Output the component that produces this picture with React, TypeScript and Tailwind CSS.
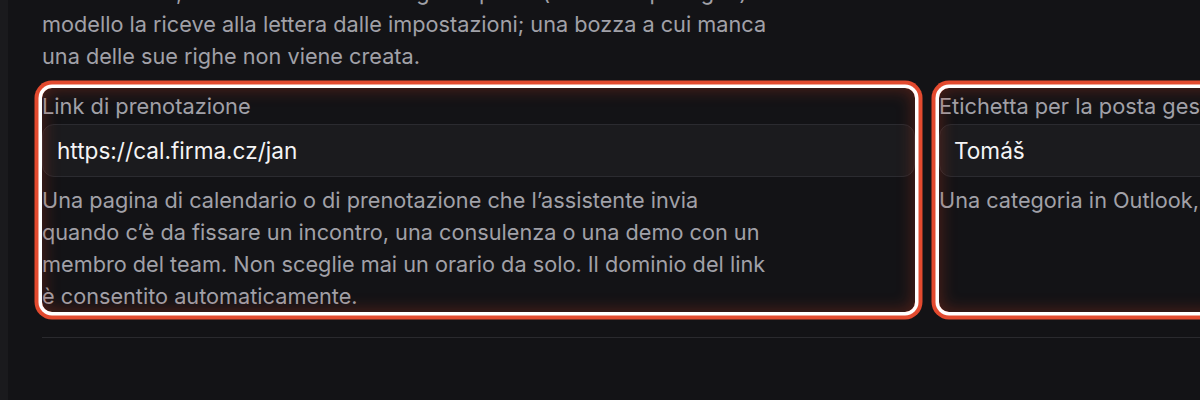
import React from "react";

function Highlight() {
  return (
    <div className="pointer-events-none absolute inset-0 rounded-[10px] shadow-[0_0_0_3.5px_#ffffff,0_0_0_7.5px_#e24a2f,inset_0_0_16px_2px_rgba(200,60,30,0.32)]" />
  );
}

function Field({
  label,
  value,
  children,
}: {
  label: string;
  value: string;
  children: React.ReactNode;
}) {
  return (
    <div className="relative flex flex-col pt-[3px]">
      <Highlight />
      <label className="whitespace-nowrap text-[21.8px] leading-[30px] text-[#a1a1a8]">
        {label}
      </label>
      <div className="mt-[3px] flex h-[53px] items-center rounded-[12px] border border-[#2b2b30] bg-[#1b1b1e] px-[14px] text-[22.6px] text-[#f4f4f5]">
        {value}
      </div>
      <div className="mt-[7px] max-w-[730px] text-[21.7px] leading-[32px] text-[#a1a1a8]">
        {children}
      </div>
    </div>
  );
}

export default function App() {
  return (
    <div
      className="flex h-[400px] w-[1200px] overflow-hidden bg-[#131316]"
      style={{ fontFamily: "Inter, 'Noto Sans', sans-serif" }}
    >
      <div className="w-[8px] shrink-0 bg-[#1a1a1d]" />
      <div className="flex min-w-0 flex-1 flex-col pl-[34px]">
        <p className="mt-[-24px] max-w-[730px] text-[21.7px] leading-[32px] text-[#a1a1a8]">
          L’intera firma, come deve chiudere ogni risposta (anche su più righe). Il
          modello la riceve alla lettera dalle impostazioni; una bozza a cui manca
          una delle sue righe non viene creata.
        </p>
        <div className="mt-[16px] grid w-[1770px] shrink-0 grid-cols-[873px_873px] gap-x-[24px]">
          <Field label="Link di prenotazione" value="https://cal.firma.cz/jan">
            Una pagina di calendario o di prenotazione che l’assistente invia
            quando c’è da fissare un incontro, una consulenza o una demo con un
            membro del team. Non sceglie mai un orario da solo. Il dominio del link
            è consentito automaticamente.
          </Field>
          <Field label="Etichetta per la posta gestita dall’assistente" value="Tomáš">
            <span className="whitespace-nowrap">
              Una categoria in Outlook, un’etichetta in Gmail.
            </span>
          </Field>
        </div>
        <div className="mt-[25px] w-[1770px] shrink-0 border-t border-[#2a2a2e]" />
      </div>
    </div>
  );
}
